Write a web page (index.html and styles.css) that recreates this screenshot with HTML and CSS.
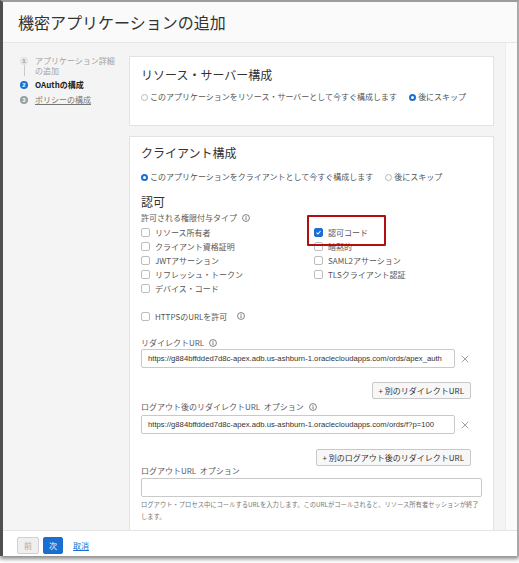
FILE: index.html
```html
<!DOCTYPE html>
<html lang="ja">
<head>
<meta charset="utf-8">
<title>機密アプリケーションの追加</title>
<link rel="stylesheet" href="styles.css">
</head>
<body>
<div class="frame">
  <header class="hdr"><h1>機密アプリケーションの追加</h1></header>
  <div class="body">
    <nav class="steps">
      <div class="step done">
        <div class="mark"><span class="dot">1</span><span class="conn"></span></div>
        <div class="lbl">アプリケーション詳細<br>の追加</div>
      </div>
      <div class="step cur">
        <div class="mark"><span class="dot">2</span></div>
        <div class="lbl">OAuthの構成</div>
      </div>
      <div class="step next">
        <div class="mark"><span class="dot">3</span></div>
        <div class="lbl"><span class="ul">ポリシーの構成</span></div>
      </div>
    </nav>
    <main class="main">
      <section class="card card-rs">
        <h2>リソース・サーバー構成</h2>
        <div class="radios">
          <label class="radio"><span class="rb"></span>このアプリケーションをリソース・サーバーとして今すぐ構成します</label>
          <label class="radio"><span class="rb on"></span>後にスキップ</label>
        </div>
      </section>
      <section class="card card-cl">
        <h2>クライアント構成</h2>
        <div class="radios">
          <label class="radio"><span class="rb on"></span>このアプリケーションをクライアントとして今すぐ構成します</label>
          <label class="radio"><span class="rb"></span>後にスキップ</label>
        </div>
        <h3>認可</h3>
        <div class="flabel first">許可される権限付与タイプ<svg class="info" viewBox="0 0 10 10"><circle cx="5" cy="5" r="4.3" fill="none" stroke="#555" stroke-width="0.9"/><rect x="4.5" y="4.2" width="1" height="3.3" fill="#555"/><circle cx="5" cy="2.8" r="0.65" fill="#555"/></svg></div>
        <div class="grants">
          <div class="gcol">
            <div class="check"><span class="cb"></span>リソース所有者</div>
            <div class="check"><span class="cb"></span>クライアント資格証明</div>
            <div class="check"><span class="cb"></span>JWTアサーション</div>
            <div class="check"><span class="cb"></span>リフレッシュ・トークン</div>
            <div class="check"><span class="cb"></span>デバイス・コード</div>
          </div>
          <div class="gcol">
            <div class="check hl"><span class="cb on"><svg viewBox="0 0 10 10"><path d="M2.2 5.2L4.2 7.2L7.9 2.9" fill="none" stroke="#fff" stroke-width="1.5"/></svg></span>認可コード</div>
            <div class="check"><span class="cb"></span>暗黙的</div>
            <div class="check"><span class="cb"></span>SAML2アサーション</div>
            <div class="check"><span class="cb"></span>TLSクライアント認証</div>
          </div>
        </div>
        <div class="check https"><span class="cb"></span>HTTPSのURLを許可<svg class="info" viewBox="0 0 10 10"><circle cx="5" cy="5" r="4.3" fill="none" stroke="#555" stroke-width="0.9"/><rect x="4.5" y="4.2" width="1" height="3.3" fill="#555"/><circle cx="5" cy="2.8" r="0.65" fill="#555"/></svg></div>

        <div class="flabel redir">リダイレクトURL<svg class="info" viewBox="0 0 10 10"><circle cx="5" cy="5" r="4.3" fill="none" stroke="#555" stroke-width="0.9"/><rect x="4.5" y="4.2" width="1" height="3.3" fill="#555"/><circle cx="5" cy="2.8" r="0.65" fill="#555"/></svg></div>
        <div class="irow r1">
          <div class="input">https://g884bffdded7d8c-apex.adb.us-ashburn-1.oraclecloudapps.com/ords/apex_auth</div>
          <svg class="x" viewBox="0 0 10 10"><path d="M1 1L9 9M9 1L1 9" stroke="#8a8a8a" stroke-width="1"/></svg>
        </div>
        <div class="brow b1"><button class="add">+ 別のリダイレクトURL</button></div>

        <div class="flabel lo">ログアウト後のリダイレクトURL&nbsp; オプション<svg class="info" viewBox="0 0 10 10"><circle cx="5" cy="5" r="4.3" fill="none" stroke="#555" stroke-width="0.9"/><rect x="4.5" y="4.2" width="1" height="3.3" fill="#555"/><circle cx="5" cy="2.8" r="0.65" fill="#555"/></svg></div>
        <div class="irow r2">
          <div class="input">https://g884bffdded7d8c-apex.adb.us-ashburn-1.oraclecloudapps.com/ords/f?p=100</div>
          <svg class="x" viewBox="0 0 10 10"><path d="M1 1L9 9M9 1L1 9" stroke="#8a8a8a" stroke-width="1"/></svg>
        </div>
        <div class="brow b2"><button class="add">+ 別のログアウト後のリダイレクトURL</button></div>

        <div class="flabel lu">ログアウトURL&nbsp; オプション</div>
        <div class="input full"></div>
        <p class="help">ログアウト・プロセス中にコールするURLを入力します。このURLがコールされると、リソース所有者セッションが終了<br>します。</p>
      </section>
    </main>
    <div class="track"></div>
  </div>
  <footer class="ftr">
    <button class="btn prev">前</button>
    <button class="btn nxt">次</button>
    <span class="cancel">取消</span>
  </footer>
</div>
</body>
</html>
```

FILE: styles.css
```css
* { box-sizing: border-box; }
html, body { margin: 0; padding: 0; background: #ffffff; }
body {
  width: 519px;
  height: 563px;
  overflow: hidden;
  font-family: "Noto Sans CJK JP", "Noto Sans", sans-serif;
  color: #333;
}
.frame {
  width: 519px;
  height: 556px;
  border-left: 3px solid #4f4f4f;
  border-top: 2px solid #9c9c9c;
  border-right: 2px solid #a9a9a9;
  box-shadow: 0 3px 4px rgba(0, 0, 0, 0.45);
  display: flex;
  flex-direction: column;
  background: #f4f4f4;
}
.hdr {
  height: 41px;
  flex: none;
  background: #fafafa;
  border-bottom: 1px solid #e6e6e6;
  display: flex;
  align-items: center;
  padding-left: 15px;
}
.hdr h1 {
  margin: 0;
  font-size: 16px;
  font-weight: 400;
  line-height: 20px;
  color: #333;
}
.body {
  flex: 1;
  min-height: 0;
  display: flex;
  overflow: hidden;
}
.steps {
  width: 126px;
  flex: none;
  padding: 13px 0 0 17px;
}
.step {
  display: flex;
  gap: 7px;
  font-size: 8px;
  line-height: 10px;
}
.step.done { padding-bottom: 4px; }
.step.cur { margin-bottom: 5px; }
.mark {
  width: 8px;
  flex: none;
  display: flex;
  flex-direction: column;
  align-items: center;
}
.dot {
  width: 8px;
  height: 8px;
  margin-top: 1px;
  border-radius: 50%;
  font-family: "Liberation Sans", sans-serif;
  font-size: 6px;
  font-weight: 700;
  line-height: 8px;
  text-align: center;
  color: #fff;
}
.conn { flex: 1; width: 1px; background: #c9c9c9; }
.done .dot { background: #e4e4e4; color: #9a9a9a; }
.cur .dot { background: #1a6fd0; }
.next .dot { background: #9d9d9d; }
.done .lbl { color: #a3a3a3; }
.cur .lbl { color: #222; font-weight: 700; }
.next .lbl { color: #777; }
.ul { text-decoration: underline; }

.main {
  width: 365px;
  flex: none;
  padding-top: 13px;
  display: flex;
  flex-direction: column;
  gap: 10px;
}
.track {
  width: 12px;
  flex: none;
  margin-left: 11px;
  background: #fbfbfb;
  border-left: 1px solid #ececec;
}
.card {
  background: #fff;
  border: 1px solid #e3e3e3;
  padding: 10px 11px 40px 11px;
  flex: none;
}
.card-rs { height: 70px; padding-bottom: 0; }
.card-cl { padding-top: 8px; }
.card h2 {
  margin: 0;
  font-size: 12px;
  font-weight: 400;
  line-height: 16px;
  color: #333;
}
.radios {
  display: flex;
  margin-top: 9px;
  font-size: 8px;
  line-height: 10px;
  color: #555;
}
.card-cl .radios { margin-top: 11px; }
.radio {
  display: flex;
  align-items: center;
  gap: 2px;
  margin-right: 12px;
  white-space: nowrap;
}
.rb {
  width: 7px;
  height: 7px;
  border-radius: 50%;
  border: 1px solid #b8b8b8;
  background: #fff;
  flex: none;
}
.rb.on { border: 2px solid #1a6fd0; }
.card h3 {
  margin: 13px 0 0;
  font-size: 12px;
  font-weight: 400;
  line-height: 14px;
  color: #333;
}
.flabel {
  display: flex;
  align-items: center;
  font-size: 8px;
  line-height: 10px;
  color: #5a5a5a;
  white-space: nowrap;
}
.flabel.first { margin-top: 4px; }
.flabel.redir { margin-top: 15px; }
.flabel.lo { margin-top: 3px; }
.flabel.lu { margin-top: 0; }
.info { width: 8px; height: 8px; margin-left: 5px; flex: none; }
.grants {
  display: grid;
  grid-template-columns: 173px 1fr;
  margin-top: 2px;
}
.check {
  display: flex;
  align-items: center;
  gap: 5px;
  height: 14px;
  font-size: 8px;
  color: #555;
  white-space: nowrap;
}
.check.hl { position: relative; }
.check.hl::after {
  content: "";
  position: absolute;
  left: -7px;
  top: -10px;
  width: 75px;
  height: 27px;
  border: 2px solid #b10f12;
  border-radius: 1px;
}
.check.https { margin-top: 14px; }
.cb {
  width: 9px;
  height: 9px;
  flex: none;
  border: 1px solid #bdbdbd;
  border-radius: 2px;
  background: #fff;
  display: flex;
}
.cb.on { background: #1a6fd0; border-color: #1a6fd0; }
.cb svg { width: 7px; height: 7px; }
.irow {
  display: flex;
  align-items: center;
}
.irow.r1 { margin-top: 1px; }
.irow.r2 { margin-top: 3px; }
.input {
  width: 314px;
  height: 19px;
  border: 1px solid #c9c9c9;
  border-radius: 2px;
  background: #fff;
  padding: 0 3px 0 6px;
  font-family: "Liberation Sans", sans-serif;
  font-size: 7.7px;
  line-height: 17px;
  color: #333;
  white-space: nowrap;
  overflow: hidden;
}
.input.full { width: 341px; margin-top: 2px; }
.x { width: 8px; height: 8px; margin-left: 6px; }
.brow {
  display: flex;
  justify-content: flex-end;
  padding-right: 11px;
}
.brow.b1 { margin-top: 14px; }
.brow.b2 { margin-top: 15px; }
.add {
  height: 17px;
  padding: 0 6px;
  border: 1px solid #c8c8c8;
  border-radius: 2px;
  background: #f7f7f7;
  font-family: "Noto Sans CJK JP", "Noto Sans", sans-serif;
  font-size: 8px;
  line-height: 15px;
  color: #333;
}
.help {
  margin: 2px 0 0;
  font-size: 6.3px;
  line-height: 12px;
  color: #777;
  white-space: nowrap;
}
.ftr {
  flex: none;
  height: 26px;
  background: #fff;
  border-top: 1px solid #e4e4e4;
  display: flex;
  align-items: flex-start;
  gap: 4px;
  padding: 6px 0 0 14px;
}
.btn {
  height: 17px;
  padding: 0;
  border-radius: 2px;
  font-family: "Noto Sans CJK JP", "Noto Sans", sans-serif;
  font-size: 8px;
  line-height: 15px;
}
.btn.prev {
  width: 22px;
  background: #efefef;
  border: 1px solid #d0d0d0;
  color: #aaa;
}
.btn.nxt {
  width: 20px;
  background: #1a6fd0;
  border: 1px solid #1a6fd0;
  color: #fff;
}
.cancel {
  margin-left: 6px;
  font-size: 8px;
  line-height: 17px;
  color: #1a6fd0;
  text-decoration: underline;
}
```
